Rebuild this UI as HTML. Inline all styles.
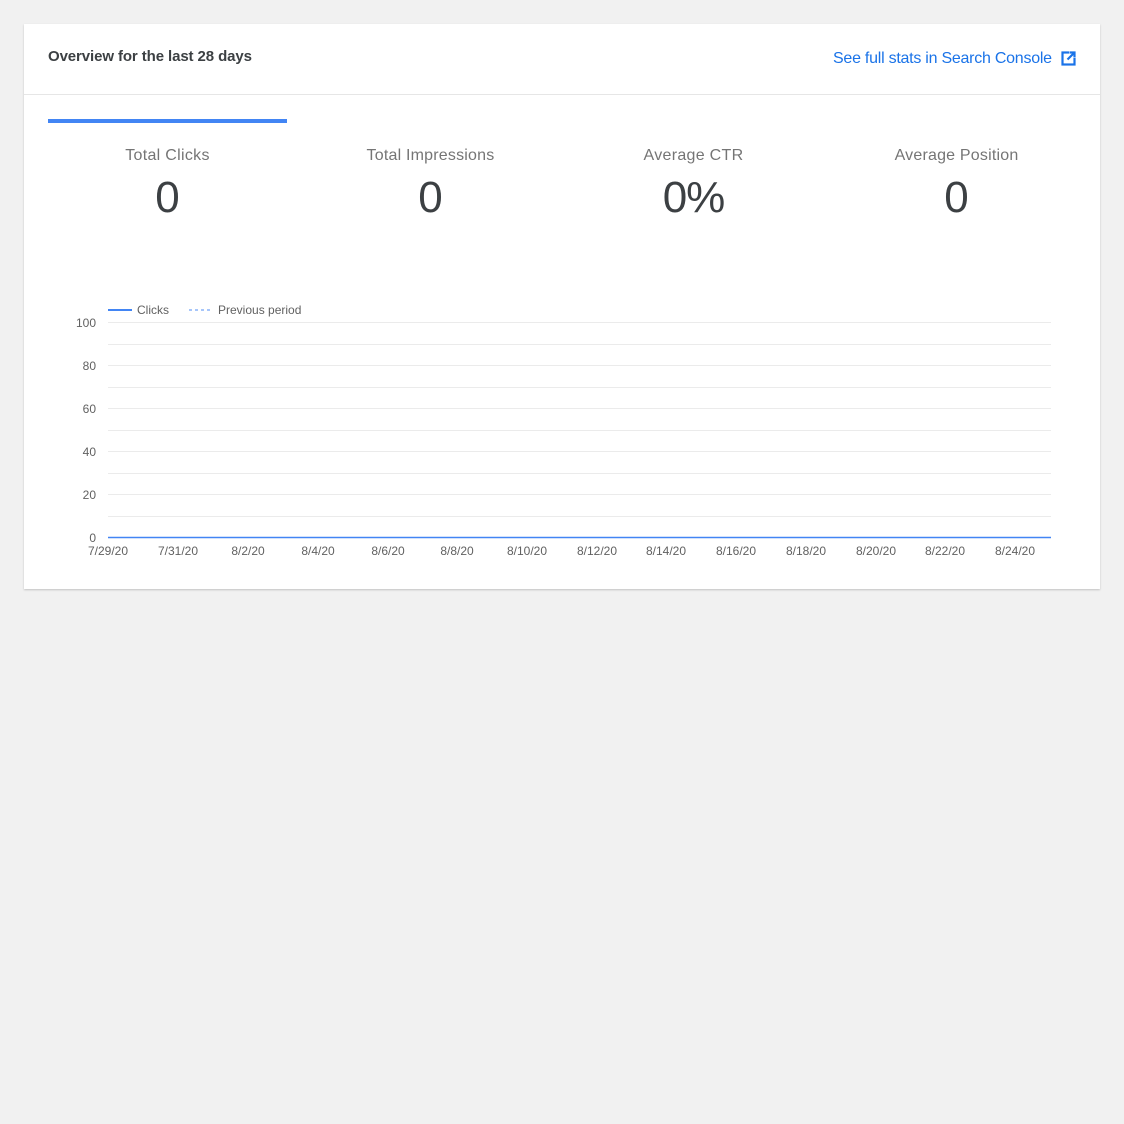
<!DOCTYPE html>
<html><head><style>
body{margin:0;background:#f1f1f1;font-family:"Liberation Sans",Roboto,sans-serif;}
.card{position:absolute;left:24px;top:24px;width:1076px;height:565px;background:#fff;box-shadow:0 1px 2px rgba(0,0,0,.2);}
.t{position:absolute;white-space:nowrap}
</style></head><body>
<div class="card"></div>
<div class="t" style="left:48px;top:48px;font-size:15px;font-weight:bold;color:#3c4043;letter-spacing:-.1px">Overview for the last 28 days</div>
<div class="t" style="left:833px;top:50px;font-size:16px;color:#1a73e8;letter-spacing:-.25px">See full stats in Search Console</div>
<svg style="position:absolute;left:1061px;top:51px" width="15" height="15" viewBox="0 0 15 15"><rect x="1.5" y="1.5" width="12" height="12" fill="none" stroke="#1a73e8" stroke-width="2.2"/><rect x="8" y="0" width="7" height="7" fill="#fff"/><path d="M8.5 1.5h5v5M13.5 1.5L6.5 8.5" fill="none" stroke="#1a73e8" stroke-width="2.2"/></svg>
<div style="position:absolute;left:24px;top:94px;width:1076px;height:1px;background:#e6e6e6"></div>
<div style="position:absolute;left:48px;top:119px;width:239px;height:4px;background:#4285f4"></div>
<div class="t" style="left:48px;width:239px;text-align:center;top:147px;font-size:16px;color:#757575;letter-spacing:.3px">Total Clicks</div>
<div class="t" style="left:311px;width:239px;text-align:center;top:147px;font-size:16px;color:#757575;letter-spacing:.2px">Total Impressions</div>
<div class="t" style="left:574px;width:239px;text-align:center;top:147px;font-size:16px;color:#757575;letter-spacing:.3px">Average CTR</div>
<div class="t" style="left:837px;width:239px;text-align:center;top:147px;font-size:16px;color:#757575;letter-spacing:.2px">Average Position</div>
<div class="t" style="left:48px;width:239px;text-align:center;top:173px;font-size:44px;color:#3c4043">0</div>
<div class="t" style="left:311px;width:239px;text-align:center;top:173px;font-size:44px;color:#3c4043">0</div>
<div class="t" style="left:574px;width:239px;text-align:center;top:173px;font-size:44px;color:#3c4043;letter-spacing:-1px">0%</div>
<div class="t" style="left:837px;width:239px;text-align:center;top:173px;font-size:44px;color:#3c4043">0</div>
<svg style="position:absolute;left:0;top:0" width="1124" height="600" font-family="Liberation Sans, sans-serif" font-size="12" fill="#616161">
<line x1="108" y1="310" x2="132" y2="310" stroke="#4285f4" stroke-width="2"/>
<text x="137" y="314">Clicks</text>
<line x1="189" y1="310" x2="211" y2="310" stroke="#8ab4f8" stroke-width="1.5" stroke-dasharray="3,3"/>
<text x="218" y="314">Previous period</text>
<g stroke="#ebebeb" stroke-width="1">
<line x1="108" x2="1051" y1="322.5" y2="322.5"/><line x1="108" x2="1051" y1="344.5" y2="344.5"/>
<line x1="108" x2="1051" y1="365.5" y2="365.5"/><line x1="108" x2="1051" y1="387.5" y2="387.5"/>
<line x1="108" x2="1051" y1="408.5" y2="408.5"/><line x1="108" x2="1051" y1="430.5" y2="430.5"/>
<line x1="108" x2="1051" y1="451.5" y2="451.5"/><line x1="108" x2="1051" y1="473.5" y2="473.5"/>
<line x1="108" x2="1051" y1="494.5" y2="494.5"/><line x1="108" x2="1051" y1="516.5" y2="516.5"/>
</g>
<line x1="108" x2="1051" y1="537.5" y2="537.5" stroke="#4285f4" stroke-width="1.5"/>
<g text-anchor="end"><text x="96" y="327">100</text><text x="96" y="370">80</text><text x="96" y="413">60</text><text x="96" y="456">40</text><text x="96" y="499">20</text><text x="96" y="542">0</text></g>
<g text-anchor="middle">
<text x="108" y="555">7/29/20</text><text x="178" y="555">7/31/20</text><text x="248" y="555">8/2/20</text><text x="318" y="555">8/4/20</text><text x="388" y="555">8/6/20</text><text x="457" y="555">8/8/20</text><text x="527" y="555">8/10/20</text><text x="597" y="555">8/12/20</text><text x="666" y="555">8/14/20</text><text x="736" y="555">8/16/20</text><text x="806" y="555">8/18/20</text><text x="876" y="555">8/20/20</text><text x="945" y="555">8/22/20</text><text x="1015" y="555">8/24/20</text>
</g>
</svg>
</body></html>
